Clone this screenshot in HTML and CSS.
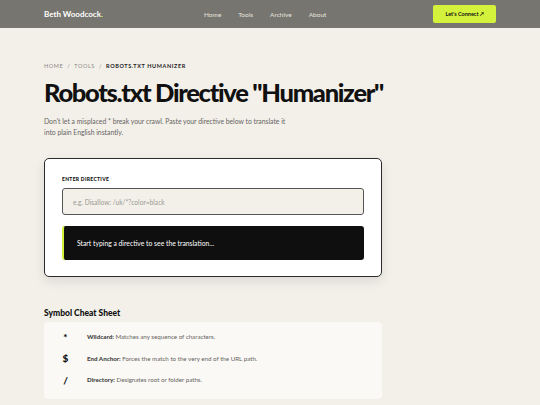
FILE: index.html
```html
<!DOCTYPE html>
<html lang="en">
<head>
  <meta charset="UTF-8">
  <title>Robots.txt Directive Humanizer</title>
  <link rel="stylesheet" href="styles.css">
</head>
<body>
  <header class="site-header">
    <div class="header-inner">
      <a class="brand" href="#">Beth Woodcock<span class="dot">.</span></a>
      <nav class="nav">
        <a href="#">Home</a>
        <a href="#">Tools</a>
        <a href="#">Archive</a>
        <a href="#">About</a>
      </nav>
      <a class="cta" href="#">Let's Connect &#8599;</a>
    </div>
  </header>

  <main class="page">
    <div class="breadcrumb">
      <span>Home</span> <span class="sep">/</span> <span>Tools</span> <span class="sep">/</span> <span class="current">Robots.txt Humanizer</span>
    </div>

    <h1>Robots.txt Directive "Humanizer"</h1>
    <p class="intro">Don't let a misplaced * break your crawl. Paste your directive below to translate it into plain English instantly.</p>

    <section class="tool-card">
      <label for="directive" class="field-label">Enter Directive</label>
      <input id="directive" type="text" placeholder="e.g. Disallow: /uk/*?color=black">
      <div id="output" class="output">Start typing a directive to see the translation...</div>
    </section>

    <h2 class="cheat-title">Symbol Cheat Sheet</h2>
    <ul class="cheat-list">
      <li><span class="symbol">*</span><span><strong>Wildcard:</strong> Matches any sequence of characters.</span></li>
      <li><span class="symbol">$</span><span><strong>End Anchor:</strong> Forces the match to the very end of the URL path.</span></li>
      <li><span class="symbol">/</span><span><strong>Directory:</strong> Designates root or folder paths.</span></li>
    </ul>
  </main>
</body>
</html>
```

FILE: styles.css
```css
body {
  margin: 0;
  font-family: "Lato", "Noto Sans", sans-serif;
  background-color: #f3f0ea;
  color: #111;
}

a {
  text-decoration: none;
}

.site-header {
  background-color: #77756f;
  height: 28px;
}

.header-inner {
  max-width: 452px;
  margin: 0 auto;
  height: 100%;
  display: flex;
  align-items: center;
}

.brand {
  color: #fff;
  font-weight: 700;
  font-size: 8px;
  width: 160px;
}

.brand .dot {
  color: #d4f23c;
}

.nav {
  flex: 1;
  display: flex;
  gap: 17px;
  font-size: 6.5px;
}

.nav a {
  color: #e6e4df;
}

.cta {
  background-color: #d4f23c;
  color: #111;
  font-weight: 700;
  font-size: 5.5px;
  padding: 6px 12px;
  border-radius: 2px;
}

.page {
  max-width: 338px;
  margin: 0 auto;
  padding: 0 158px 0 44px;
}

.breadcrumb {
  padding-top: 35px;
  font-size: 5.5px;
  letter-spacing: 0.6px;
  text-transform: uppercase;
  color: #8a8884;
}

.breadcrumb .sep {
  margin: 0 2px;
}

.breadcrumb .current {
  color: #222;
  font-weight: 700;
}

h1 {
  font-size: 25.5px;
  font-weight: 900;
  letter-spacing: -1.3px;
  margin: 9px 0 10px;
  line-height: 1.1;
  white-space: nowrap;
}

.intro {
  font-size: 6.8px;
  line-height: 11px;
  color: #66645f;
  margin: 0 0 20px;
  max-width: 250px;
}

.tool-card {
  background-color: #fff;
  border: 1px solid #2b2b2b;
  border-radius: 5px;
  box-shadow: 0 4px 12px rgba(0, 0, 0, 0.1);
  padding: 17px 17px 16px;
}

.field-label {
  display: block;
  font-size: 5px;
  font-weight: 900;
  letter-spacing: 0.3px;
  text-transform: uppercase;
  margin-bottom: 6px;
}

#directive {
  display: block;
  box-sizing: border-box;
  width: 100%;
  height: 27px;
  background-color: #f3f0ea;
  border: 1px solid #555;
  border-radius: 3px;
  padding: 0 10px;
  font-family: inherit;
  font-size: 6.6px;
  color: #111;
}

#directive::placeholder {
  color: #9a9893;
}

.output {
  margin-top: 11px;
  background-color: #0f0f0f;
  border-left: 2px solid #d4f23c;
  border-radius: 3px;
  color: #fff;
  font-size: 6.8px;
  padding: 13px 13px;
  height: 8px;
}

.cheat-title {
  font-size: 8.5px;
  font-weight: 900;
  margin: 31px 0 4px;
}

.cheat-list {
  list-style: none;
  margin: 0;
  padding: 4px 0 8px;
  background-color: #faf9f5;
  border-radius: 4px;
}

.cheat-list li {
  display: flex;
  align-items: center;
  height: 21.5px;
  font-size: 6.2px;
  color: #66645f;
}

.cheat-list strong {
  color: #444;
  font-weight: 900;
}

.symbol {
  width: 43px;
  text-align: center;
  font-size: 10px;
  font-weight: 900;
  color: #111;
}
```
